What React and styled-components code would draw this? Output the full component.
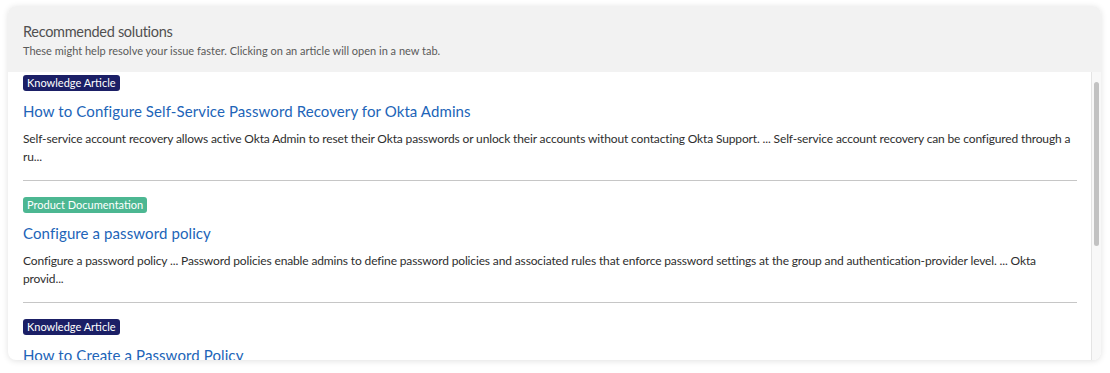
import React from 'react';
import styled, { createGlobalStyle } from 'styled-components';

const GlobalStyle = createGlobalStyle`
    html, body {
        margin: 0;
        padding: 0;
        background: #ffffff;
        font-family: Lato, "Noto Sans", sans-serif;
    }
`;

const Page = styled.div`
    padding: 6px 9px 13px 8px;
`;

const Card = styled.div`
    display: flex;
    flex-direction: column;
    height: 354px;
    border-radius: 8px;
    overflow: hidden;
    background: #ffffff;
    box-shadow: 0 1px 6px rgba(0, 0, 0, 0.12);
`;

const Header = styled.div`
    height: 66px;
    box-sizing: border-box;
    padding: 17px 15px 0 15px;
    background: #f2f2f2;
`;

const Title = styled.div`
    font-size: 14.5px;
    letter-spacing: -0.3px;
    color: #505050;
    line-height: 18px;
`;

const Subtitle = styled.div`
    margin-top: 3px;
    font-size: 11px;
    color: #5a5a5a;
    line-height: 14px;
`;

const Body = styled.div`
    flex: 1;
    display: flex;
    min-height: 0;
`;

const List = styled.div`
    flex: 1;
    overflow: hidden;
    padding: 3px 14px 0 15px;
`;

const Item = styled.div`
    padding-bottom: 14px;
    margin-bottom: 16px;
    border-bottom: 1px solid ${p => (p.last ? 'transparent' : '#c6c6c6')};
`;

const BadgeRow = styled.div`
    display: flex;
`;

const Badge = styled.span`
    padding: 0 4px;
    height: 16px;
    line-height: 16px;
    border-radius: 3px;
    font-size: 11px;
    color: #ffffff;
    background: ${p => (p.kind === 'doc' ? '#4cb792' : '#1b1f66')};
`;

const ItemTitle = styled.a`
    display: block;
    margin-top: 10px;
    font-size: 15px;
    letter-spacing: 0.1px;
    line-height: 20px;
    color: #2164b8;
    text-decoration: none;
`;

const Description = styled.p`
    margin: 9px 0 0 0;
    font-size: 12px;
    letter-spacing: -0.14px;
    line-height: 18px;
    color: #2e2e2e;
`;

const Track = styled.div`
    width: 10px;
    background: #f8f8f8;
    border-left: 1px solid #e4e4e4;
    padding: 10px 2px 0 2px;
    box-sizing: border-box;
`;

const Thumb = styled.div`
    height: 164px;
    border-radius: 3px;
    background: #c2c2c2;
`;

const articles = [
    {
        kind: 'ka',
        label: 'Knowledge Article',
        title: 'How to Configure Self-Service Password Recovery for Okta Admins',
        text: 'Self-service account recovery allows active Okta Admin to reset their Okta passwords or unlock their accounts without contacting Okta Support. ... Self-service account recovery can be configured through a ru...',
    },
    {
        kind: 'doc',
        label: 'Product Documentation',
        title: 'Configure a password policy',
        text: 'Configure a password policy ... Password policies enable admins to define password policies and associated rules that enforce password settings at the group and authentication-provider level. ... Okta provid...',
    },
    {
        kind: 'ka',
        label: 'Knowledge Article',
        title: 'How to Create a Password Policy',
        text: 'Password policies define the complexity requirements and the lockout settings for user passwords within an Okta organization.',
    },
];

export default function App() {
    return (
        <Page>
            <GlobalStyle />
            <Card>
                <Header>
                    <Title>Recommended solutions</Title>
                    <Subtitle>These might help resolve your issue faster. Clicking on an article will open in a new tab.</Subtitle>
                </Header>
                <Body>
                    <List>
                        {articles.map((a, i) => (
                            <Item key={i} last={i === articles.length - 1}>
                                <BadgeRow>
                                    <Badge kind={a.kind}>{a.label}</Badge>
                                </BadgeRow>
                                <ItemTitle href="#">{a.title}</ItemTitle>
                                <Description>{a.text}</Description>
                            </Item>
                        ))}
                    </List>
                    <Track>
                        <Thumb />
                    </Track>
                </Body>
            </Card>
        </Page>
    );
}
